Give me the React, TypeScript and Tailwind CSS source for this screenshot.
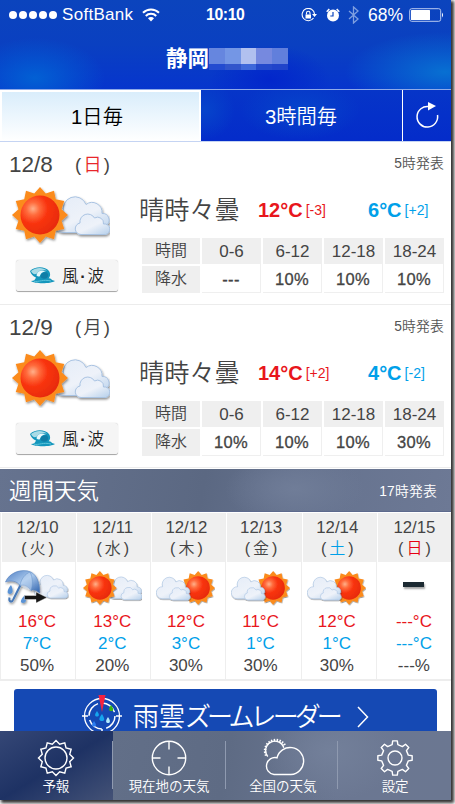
import React from "react";

const starPoints = (cx: number, cy: number, outer: number, inner: number, count: number) => {
  const points: string[] = [];
  for (let i = 0; i < count * 2; i++) {
    const r = i % 2 === 0 ? outer : inner;
    const a = (Math.PI * i) / count - Math.PI / 2;
    points.push(`${(cx + r * Math.cos(a)).toFixed(2)},${(cy + r * Math.sin(a)).toFixed(2)}`);
  }
  return points.join(" ");
};

const gearPath = (cx: number, cy: number, outer: number, inner: number, teeth: number) => {
  const step = (Math.PI * 2) / teeth;
  const offsets: [number, number][] = [
    [-0.27, inner],
    [-0.17, outer],
    [0.17, outer],
    [0.27, inner],
  ];
  const points: string[] = [];
  for (let i = 0; i < teeth; i++) {
    for (const [o, r] of offsets) {
      const a = (i + o) * step - Math.PI / 2;
      points.push(`${(cx + r * Math.cos(a)).toFixed(2)} ${(cy + r * Math.sin(a)).toFixed(2)}`);
    }
  }
  return `M${points.join("L")}Z`;
};

const days = [
  { date: "12/8", day: "日", sunday: true, high: "12", highDiff: "[-3]", low: "6", lowDiff: "[+2]", rain: ["---", "10%", "10%", "10%"] },
  { date: "12/9", day: "月", sunday: false, high: "14", highDiff: "[+2]", low: "4", lowDiff: "[-2]", rain: ["10%", "10%", "10%", "30%"] },
];

const hours = ["0-6", "6-12", "12-18", "18-24"];

const week = [
  { date: "12/10", day: "火", color: "", pad: "pr-[2px]", icon: "rain", high: "16", low: "7", rain: "50" },
  { date: "12/11", day: "水", color: "", pad: "pr-[2px]", icon: "sun", high: "13", low: "2", rain: "20" },
  { date: "12/12", day: "木", color: "", pad: "pr-[5px]", icon: "cloud", high: "12", low: "3", rain: "30" },
  { date: "12/13", day: "金", color: "", pad: "pr-[6px]", icon: "cloud", high: "11", low: "1", rain: "30" },
  { date: "12/14", day: "土", color: "text-[#00a0e9]", pad: "pr-[4px]", icon: "cloud", high: "12", low: "1", rain: "30" },
  { date: "12/15", day: "日", color: "text-[#e60012]", pad: "pr-0", icon: "none", high: "---", low: "---", rain: "---" },
];

const Defs = () => (
  <svg className="absolute h-0 w-0">
    <defs>
      <radialGradient id="sunRed" cx="0.32" cy="0.34" r="0.75">
        <stop offset="0" stopColor="#ffb08a" />
        <stop offset="0.22" stopColor="#ff6b3c" />
        <stop offset="0.5" stopColor="#f93410" />
        <stop offset="1" stopColor="#e62a08" />
      </radialGradient>
      <linearGradient id="cloudFill" x1="0" y1="0" x2="0.8" y2="1">
        <stop offset="0" stopColor="#e4ecf8" />
        <stop offset="0.6" stopColor="#eef2f9" />
        <stop offset="1" stopColor="#c0d6ee" />
      </linearGradient>
      <linearGradient id="umbrella" x1="0" y1="0" x2="1" y2="1">
        <stop offset="0" stopColor="#4f7fc4" />
        <stop offset="0.5" stopColor="#a9c8ec" />
        <stop offset="1" stopColor="#2f62ad" />
      </linearGradient>
      <filter id="drop" x="-20%" y="-20%" width="150%" height="150%">
        <feDropShadow dx="0.8" dy="1.5" stdDeviation="0.9" floodColor="#000" floodOpacity="0.45" />
      </filter>
    </defs>
  </svg>
);

const Sun = () => (
  <g filter="url(#drop)">
    <polygon points={starPoints(28, 28, 28, 22.3, 12)} fill="#fb8b1e" />
    <circle cx="28" cy="28" r="19.5" fill="url(#sunRed)" />
  </g>
);

const Clouds = () => (
  <g filter="url(#drop)" stroke="#a9c3e2" strokeWidth="1" fill="url(#cloudFill)">
    <path d="M8 38 A10 10 0 0 1 9 18 A11.300 11.300 0 0 1 31 10 A10 10 0 0 1 47 19 A6.500 6.500 0 0 1 51 31 L48 38 Z" />
    <path d="M26 40 A5.800 5.800 0 0 1 25 28.500 A7.800 7.800 0 0 1 39.500 23.500 A6 6 0 0 1 48.500 29.500 A5 5 0 0 1 50.500 40 Z" />
  </g>
);

const SunCloud = ({ className }: { className: string }) => (
  <svg viewBox="0 0 98 58" className={className}>
    <g transform="translate(43 7.5)">
      <Clouds />
    </g>
    <Sun />
  </svg>
);

const CloudSun = ({ className }: { className: string }) => (
  <svg viewBox="0 0 98 58" className={className}>
    <g transform="translate(42 0)">
      <Sun />
    </g>
    <g transform="translate(2 8)">
      <Clouds />
    </g>
  </svg>
);

const RainCloud = () => (
  <svg viewBox="0 0 64 36" className="h-9 w-16">
    <g transform="translate(30 4) scale(.6)">
      <Clouds />
    </g>
    <g filter="url(#drop)">
      <path d="M16.500 13 L8.500 29 C7 33 3.500 32 4.500 27.500" fill="none" stroke="#4678b8" strokeWidth="2" />
      <path d="M0.5 12 C4 3 16 -2 26 2 C33 6 35 15 34.500 23 C31 20 28 19 26 20.500 C23 16 19 14 15 15.500 C12 11 6 10 0.5 12 Z" fill="url(#umbrella)" stroke="#4a79b8" strokeWidth=".5" />
      <path d="M15 15.500 C16 9 20 4 25 2 C28 8 28 15 26 20.500" fill="#c4daf3" fillOpacity=".5" stroke="#6490c8" strokeWidth=".5" />
      <path d="M6 15 C2 20 1.500 24 5 24 C8 24 8.500 20 6 15Z M20 25 C15 30 15 33 18 33 C21 33 22 30 20 25Z" fill="#5a93d6" />
    </g>
    <path d="M19.500 25.500 H31 V22 L42 27.500 L31 33 V29.500 H19.500 Z" fill="#161616" stroke="#fff" strokeWidth=".4" />
  </svg>
);

const Wave = () => (
  <svg viewBox="0 0 25 17" className="h-[17px] w-[25px]">
    <path d="M0 4 C5 -1 15 -1 19 4 C21 7 20 10 18.500 11.500 C20 11 21 12 22 13 L25 14 C21 17 4 17 1 14 C4 14 5 13 6 10.500 C3 9.500 1 7 0 4Z" fill="#1496bc" />
    <path d="M1 4 C6 0 13 0 17 3.500 C12 2 8 4 7 6.500 C5 8 2 7 1 4Z" fill="#a9dbe6" />
    <path d="M6.500 8.500 C7 4 12 2 16 4.500 C12 4.500 10.500 7 10 9 C9 10 7.500 9.500 6.500 8.500Z" fill="#e6f7fa" />
    <path d="M10.500 9 C11 6 14 4.500 17 5.500 C19 8 18 10.500 16 11.500 C13 12 10.500 11 10.500 9Z" fill="#0f7da6" />
    <path d="M4 14.200 C9 15.300 13 12 21 14" fill="none" stroke="#5cc3da" strokeWidth="1" />
  </svg>
);

const WeekIcon = ({ icon }: { icon: string }) => {
  if (icon === "rain") return <RainCloud />;
  if (icon === "sun") return <SunCloud className="h-[35px] w-[59px]" />;
  if (icon === "cloud") return <CloudSun className="h-[35px] w-[59px]" />;
  return <div className="mb-2 h-[5px] w-[21px] bg-[#1c2a32] shadow-[1px_2px_2px_rgba(0,0,0,0.35)]" />;
};

const StatusBar = () => (
  <div className="flex h-[29px] items-center pl-[9px] text-[17px] text-white">
    <div className="flex gap-[2px]">
      {[0, 1, 2, 3, 4].map((i) => (
        <span key={i} className="h-2 w-2 rounded-full bg-white" />
      ))}
    </div>
    <span className="ml-[5px] w-[73px] pt-px tracking-[0.3px]">SoftBank</span>
    <svg viewBox="0 0 18 14" className="ml-[7px] h-[14px] w-[18px]" fill="none" stroke="#fff" strokeWidth="2">
      <path d="M1 4.800 C5.500 .4 12.500 .4 17 4.800 M3.800 8 C6.500 5.100 11.500 5.100 14.200 8" />
      <path d="M9 13.500 L6 10.300 C7.600 8.700 10.400 8.700 12 10.300Z" fill="#fff" stroke="none" />
    </svg>
    <span className="ml-[46px] w-[40px] pt-px text-[15.800px] font-bold tracking-[-0.4px]">10:10</span>
    <svg viewBox="0 0 17 14" className="ml-[55px] h-[14px] w-[17px]" fill="none" stroke="#fff" strokeWidth="1.100">
      <path d="M12.500 10 A6.200 6.200 0 1 1 13.500 6" />
      <path d="M11 6 H16 L13.500 9Z M4.500 6.500 H10 V10.500 H4.500Z" fill="#fff" stroke="none" />
      <path d="M5.500 6.500 V5 A1.700 1.700 0 0 1 9 5 V6.500" />
    </svg>
    <svg viewBox="0 0 14 14" className="ml-[8px] h-[14px] w-[14px]">
      <circle cx="7" cy="7.600" r="6" fill="#fff" />
      <path d="M7 4 V8 H4.300" stroke="#0b44bd" strokeWidth="1.200" fill="none" />
      <path d="M.7 3.800 L3.300 1 M10.700 1 L13.300 3.800" stroke="#fff" strokeWidth="1.500" />
    </svg>
    <svg viewBox="0 0 11 18" className="ml-[8px] h-[18px] w-[11px]" fill="none" stroke="#7f9fe0" strokeWidth="1.300">
      <path d="M1 5 L10 13 L5.500 17 V1 L10 5 L1 13" />
    </svg>
    <span className="ml-[9px] w-[37px] pt-px text-[17.500px]">68%</span>
    <svg viewBox="0 0 35 14" className="ml-[4px] h-[14px] w-[35px]">
      <rect x=".7" y=".7" width="31" height="12.600" rx="2" fill="none" stroke="#b9caf0" strokeWidth="1" />
      <rect x="2" y="2" width="19" height="10" rx=".5" fill="#fff" />
      <path d="M33 4.500 Q35 7 33 9.500Z" fill="#fff" />
    </svg>
  </div>
);

const Header = () => (
  <header className="h-[90px] border-b border-[#8eaae9] bg-[radial-gradient(ellipse_70px_40px_at_35px_78px,#0260d4,transparent),radial-gradient(ellipse_100px_40px_at_445px_72px,#0870d2,transparent),radial-gradient(ellipse_60px_35px_at_270px_80px,#0226cb,transparent),linear-gradient(#0b44bd,#0a40c1_50%,#0635cd)]">
    <StatusBar />
    <div className="flex h-[60px] items-center pl-[166px]">
      <h1 className="w-[43px] whitespace-nowrap text-[21.500px] font-bold leading-[60px] text-white">静岡</h1>
      <div className="mb-[1px] w-[79px]">
        <div className="grid h-4 grid-cols-5">
          <span className="bg-[#6686df]" />
          <span className="bg-[#7496e5]" />
          <span className="bg-[#b1c0ef]" />
          <span className="bg-[#7689df]" />
          <span className="bg-[#617fdc]" />
        </div>
        <div className="grid h-1.5 grid-cols-5">
          <span className="bg-[#234bd0]" />
          <span className="bg-[#3155cb]" />
          <span className="bg-[#3e68da]" />
          <span className="bg-[#2449cb]" />
          <span className="bg-[#2044ca]" />
        </div>
      </div>
    </div>
  </header>
);

const Tabs = () => (
  <div className="flex h-[52px] border-b border-[#c5d4f3] bg-[radial-gradient(ellipse_60px_30px_at_300px_20px,#0644cb,transparent),radial-gradient(ellipse_30px_30px_at_205px_20px,#0644cb,transparent),linear-gradient(#0635c8,#042cca)] text-[20.300px]">
    <div className="flex w-[201px] items-center justify-center border-x-2 border-t-2 border-white bg-linear-to-b from-[#d9edfb] to-white pt-px pr-[7px] text-black">
      1日毎
    </div>
    <div className="flex w-[201px] items-center justify-center pt-[3px] pr-px text-white">3時間毎</div>
    <div className="flex flex-1 items-center justify-center border-l border-white">
      <svg viewBox="0 0 26 28" className="mb-px h-7 w-[26px]" fill="none" stroke="#fff" strokeWidth="1.500">
        <path d="M15 5.600 A10.300 10.300 0 1 0 23.500 14" />
        <path d="M14 1 L22 5 L14 9.500Z" fill="#fff" stroke="none" />
      </svg>
    </div>
  </div>
);

const DayCard = ({ data }: { data: (typeof days)[0] }) => (
  <section className="h-[163px] border-b border-[#ececec] pr-[7px]">
    <div className="flex h-[43px] items-center pt-[2px] pl-[9px] text-[#444]">
      <span className="w-[58px] text-[22.500px]">{data.date}</span>
      <span className="flex w-[43px] items-center justify-between pl-[8px] text-[18.500px]">
        <span>(</span>
        <span className={data.sunday ? "text-[#e8262b]" : ""}>{data.day}</span>
        <span>)</span>
      </span>
      <span className="ml-auto tracking-[0.2px] text-[13.800px] text-[#555]">5時発表</span>
    </div>
    <div className="flex">
      <div className="w-[142px] pl-[12px]">
        <SunCloud className="mt-[2px] h-[58px] w-[98px]" />
        <div className="mt-[15px] ml-[4px] flex h-8 w-[102px] items-center rounded-[3px] border-b border-[#aaa] bg-[#f5f5f5] pl-[14px] text-[16.500px] text-[#222] shadow-[0_0_1px_#bbb]">
          <Wave />
          <span className="ml-[7px] flex pt-px">
            風<span className="w-[9px] text-center font-bold">·</span>波
          </span>
        </div>
      </div>
      <div className="flex-1">
        <div className="-ml-[3px] flex h-[50px] items-center whitespace-nowrap">
          <span className="w-[119px] pt-px text-[25.200px] text-[#444]">晴時々曇</span>
          <div className="flex w-[110px] items-center text-[#e8161c]">
            <span className="text-[20px] font-bold">{data.high}°C</span>
            <span className="ml-[3px] text-[14px]">{data.highDiff}</span>
          </div>
          <div className="flex items-center text-[#00a0e9]">
            <span className="text-[20px] font-bold">{data.low}°C</span>
            <span className="ml-[3px] text-[14px]">{data.lowDiff}</span>
          </div>
        </div>
        <div className="mt-[3px] grid grid-cols-[58px_59px_59px_59px_59px] gap-x-[2px] text-center text-[17px] text-[#444]">
          <div className="mb-[2px] h-[26px] bg-[#efefef] text-[16px] leading-[26px]">時間</div>
          {hours.map((h) => (
            <div key={h} className="h-[26px] bg-[#efefef] leading-[27px]">
              {h}
            </div>
          ))}
          <div className="h-[27px] bg-[#efefef] text-[16px] leading-[26px]">降水</div>
          {data.rain.map((r, i) => (
            <div key={i} className="-mt-[2px] h-[29px] border-r border-b border-[#efefef] text-[16.500px] leading-[30px] tracking-[0.3px] [-webkit-text-stroke:0.3px_#444]">
              {r}
            </div>
          ))}
        </div>
      </div>
    </div>
  </section>
);

const Week = () => (
  <section>
    <div className="flex h-[43px] items-center justify-between border-b border-[#5d6a8d] bg-[radial-gradient(ellipse_70px_35px_at_295px_20px,#707d98,transparent),linear-gradient(100deg,#66738f,#5b6882_45%,#65728e_65%,#6d7995)] pr-[14px] pl-[9px] text-white">
      <h2 className="pt-[4px] text-[22.500px] leading-none">週間天気</h2>
      <span className="pt-[4px] tracking-[0.2px] text-[13.800px]">17時発表</span>
    </div>
    <div className="grid h-[169px] grid-cols-6 border-b-2 border-[#ededed] pt-px">
      {week.map((d) => (
        <div key={d.date} className="flex flex-col border-l border-[#eee] text-center text-[#444]">
          <div className={`ml-px h-[49px] bg-[#efefef] pt-[4px] text-[16.800px] leading-[21px] ${d.pad}`}>
            <div>{d.date}</div>
            <div className="flex justify-center gap-[3px] text-[16px]">
              <span>(</span>
              <span className={d.color}>{d.day}</span>
              <span>)</span>
            </div>
          </div>
          <div className={`flex h-[48px] items-center justify-center pt-[4px] ${d.pad}`}>
            <WeekIcon icon={d.icon} />
          </div>
          <div className={`pt-px text-[17px] leading-[22px] ${d.pad}`}>
            <div className="h-[22px] text-[#e8161c]">{d.high}°C</div>
            <div className="h-[22px] text-[#00a0e9]">{d.low}°C</div>
            <div>{d.rain}%</div>
          </div>
        </div>
      ))}
    </div>
  </section>
);

const Radar = () => (
  <svg viewBox="0 0 40 42" className="mt-px h-[42px] w-10" fill="none" stroke="#fff">
    <circle cx="20" cy="21" r="17.500" strokeWidth="1.300" />
    <circle cx="20" cy="21" r="13" strokeWidth="1.500" strokeDasharray="16 4.400" />
    <path d="M0 21 H6 M34 21 H40 M20 34 V40" strokeWidth="1.500" />
    <path d="M16.500 0 H23.500 L20 17Z" fill="#f5223f" stroke="none" />
    <path d="M15 16 C12 20 13 21.500 15 21.500 C17 21.500 18 20 15 16Z M20 19 C16 24 17 26 20 26 C23 26 23 24 20 19Z" fill="#16a5ee" stroke="none" />
    <path d="M29 10 C26 14 27 16 29 16 C32 16 32 14 29 10Z" fill="#39b614" stroke="none" />
    <path d="M26 22 C23 26 24 28 26 28 C28 28 29 26 26 22Z" fill="#b5ecfc" stroke="none" />
    <path d="M12 26 C9 30 10 31.500 12 31.500 C14 31.500 15 30 12 26Z" fill="#2b7df0" stroke="none" />
  </svg>
);

const Banner = () => (
  <div className="h-[50px] overflow-hidden px-[14px] pt-2">
    <div className="flex h-[60px] items-start rounded-[3px] bg-[#1549b4] pt-[5px] pl-[68px] text-white">
      <Radar />
      <span className="ml-[11px] w-[210px] whitespace-nowrap text-[26px] leading-[46px]">
        雨雲<span className="tracking-[-3.900px]">ズームレーダー</span>
      </span>
      <svg viewBox="0 0 12 22" className="mt-[12px] ml-[14px] h-[22px] w-3" fill="none" stroke="#fff" strokeWidth="1.500">
        <path d="M1 1 L10.500 11 L1 21" />
      </svg>
    </div>
  </div>
);

const navItems = [
  {
    label: "予報",
    pad: "pl-0",
    icon: (
      <>
        <polygon points={starPoints(18, 18, 17.5, 14.2, 12)} />
        <circle cx="18" cy="18" r="11" />
      </>
    ),
  },
  {
    label: "現在地の天気",
    pad: "pl-px",
    icon: (
      <>
        <circle cx="18" cy="18" r="16.700" />
        <path d="M18 1 V9.500 M18 26.500 V35 M1 18 H9.500 M26.500 18 H35" />
      </>
    ),
  },
  {
    label: "全国の天気",
    pad: "pl-[3px]",
    icon: (
      <>
        <path d="M1.200 15.500 A10.500 10.500 0 1 1 20.200 6" strokeWidth="2.600" strokeDasharray="1.400 1.400" />
        <path d="M2.800 16.500 A9.300 9.300 0 1 1 18.800 7.800" />
        <path d="M9 34.500 A8.500 8.500 0 1 1 12 17.800 A13.500 13.500 0 1 1 26 34.500 Z" />
      </>
    ),
  },
  {
    label: "設定",
    pad: "pl-px",
    icon: (
      <>
        <path d={gearPath(18, 18, 17.3, 13.6, 8)} strokeLinejoin="round" />
        <circle cx="18" cy="18" r="7" />
      </>
    ),
  },
];

const BottomNav = () => (
  <nav className="grid h-[69px] grid-cols-4 bg-[radial-gradient(ellipse_70px_50px_at_330px_20px,#73809a,transparent),linear-gradient(100deg,#66738c,#5e6b84_50%,#6b7792_75%,#6b7791)]">
    {navItems.map((item, i) => (
      <div
        key={item.label}
        className={`flex items-stretch pt-[9px] ${i === 0 ? "bg-linear-to-br from-[#354776] via-[#1e3264] to-[#445276]" : ""}`}
      >
        <div className={`flex flex-1 flex-col items-center text-white ${item.pad}`}>
          <svg viewBox="0 0 40 36" className="h-9 w-10 overflow-visible" fill="none" stroke="#fff" strokeWidth="1.400">
            <g transform="translate(2 0)">{item.icon}</g>
          </svg>
          <span className="mt-[2px] whitespace-nowrap text-[13.500px] leading-[18px]">{item.label}</span>
        </div>
        {i < 3 && <span className="mt-px h-[48px] w-px bg-[#8f9ab0]" />}
      </div>
    ))}
  </nav>
);

export default function App() {
  return (
    <div className="h-[804px] w-[455px] overflow-hidden bg-white font-['Liberation_Sans','Noto_Sans_CJK_JP',sans-serif] font-[350]">
      <Defs />
      <div className="flex h-[800px] w-[451px] flex-col bg-white shadow-[2px_2px_3px_1px_#333]">
        <Header />
        <Tabs />
        {days.map((d) => (
          <DayCard key={d.date} data={d} />
        ))}
        <div className="h-px" />
        <Week />
        <Banner />
        <BottomNav />
      </div>
    </div>
  );
}
